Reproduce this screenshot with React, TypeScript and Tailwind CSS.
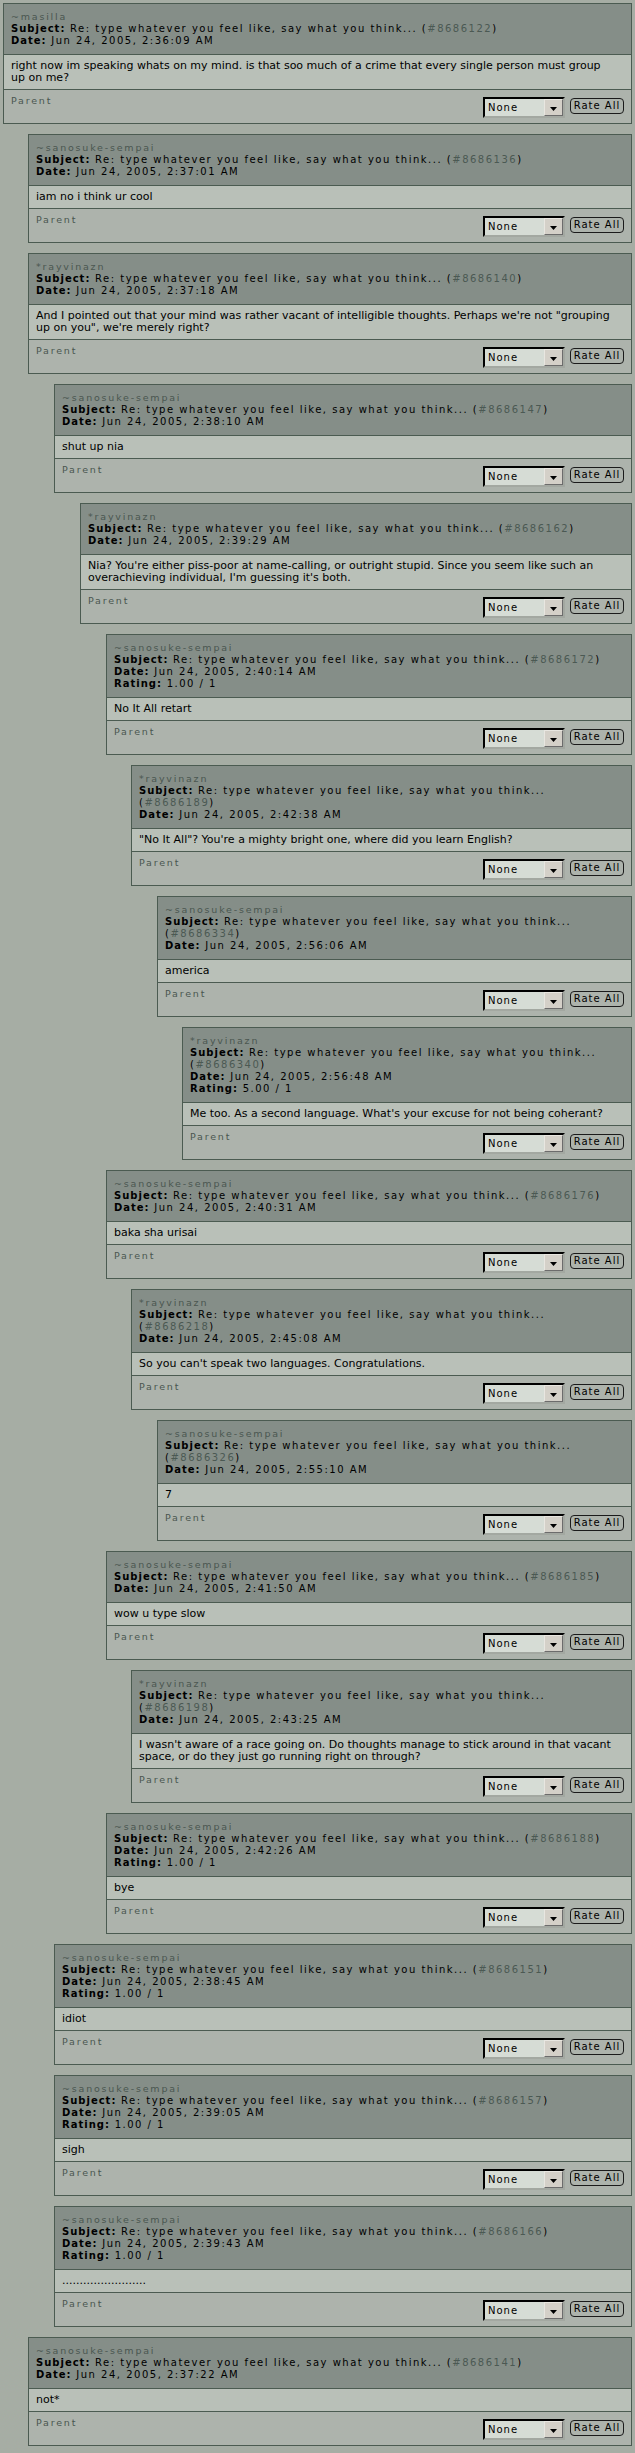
import React from "react";

type Post = {
  level: number;
  user: string;
  id: string;
  date: string;
  rating?: string;
  body: string[];
};

const posts: Post[] = [
  { level: 0, user: "~masilla", id: "8686122", date: "Jun 24, 2005, 2:36:09 AM", body: ["right now im speaking whats on my mind. is that soo much of a crime that every single person must group", "up on me?"] },
  { level: 1, user: "~sanosuke-sempai", id: "8686136", date: "Jun 24, 2005, 2:37:01 AM", body: ["iam no i think ur cool"] },
  { level: 1, user: "*rayvinazn", id: "8686140", date: "Jun 24, 2005, 2:37:18 AM", body: ["And I pointed out that your mind was rather vacant of intelligible thoughts. Perhaps we're not \"grouping", "up on you\", we're merely right?"] },
  { level: 2, user: "~sanosuke-sempai", id: "8686147", date: "Jun 24, 2005, 2:38:10 AM", body: ["shut up nia"] },
  { level: 3, user: "*rayvinazn", id: "8686162", date: "Jun 24, 2005, 2:39:29 AM", body: ["Nia? You're either piss-poor at name-calling, or outright stupid. Since you seem like such an", "overachieving individual, I'm guessing it's both."] },
  { level: 4, user: "~sanosuke-sempai", id: "8686172", date: "Jun 24, 2005, 2:40:14 AM", rating: "1.00 / 1", body: ["No It All retart"] },
  { level: 5, user: "*rayvinazn", id: "8686189", date: "Jun 24, 2005, 2:42:38 AM", body: ["\"No It All\"? You're a mighty bright one, where did you learn English?"] },
  { level: 6, user: "~sanosuke-sempai", id: "8686334", date: "Jun 24, 2005, 2:56:06 AM", body: ["america"] },
  { level: 7, user: "*rayvinazn", id: "8686340", date: "Jun 24, 2005, 2:56:48 AM", rating: "5.00 / 1", body: ["Me too. As a second language. What's your excuse for not being coherant?"] },
  { level: 4, user: "~sanosuke-sempai", id: "8686176", date: "Jun 24, 2005, 2:40:31 AM", body: ["baka sha urisai"] },
  { level: 5, user: "*rayvinazn", id: "8686218", date: "Jun 24, 2005, 2:45:08 AM", body: ["So you can't speak two languages. Congratulations."] },
  { level: 6, user: "~sanosuke-sempai", id: "8686326", date: "Jun 24, 2005, 2:55:10 AM", body: ["7"] },
  { level: 4, user: "~sanosuke-sempai", id: "8686185", date: "Jun 24, 2005, 2:41:50 AM", body: ["wow u type slow"] },
  { level: 5, user: "*rayvinazn", id: "8686198", date: "Jun 24, 2005, 2:43:25 AM", body: ["I wasn't aware of a race going on. Do thoughts manage to stick around in that vacant", "space, or do they just go running right on through?"] },
  { level: 4, user: "~sanosuke-sempai", id: "8686188", date: "Jun 24, 2005, 2:42:26 AM", rating: "1.00 / 1", body: ["bye"] },
  { level: 2, user: "~sanosuke-sempai", id: "8686151", date: "Jun 24, 2005, 2:38:45 AM", rating: "1.00 / 1", body: ["idiot"] },
  { level: 2, user: "~sanosuke-sempai", id: "8686157", date: "Jun 24, 2005, 2:39:05 AM", rating: "1.00 / 1", body: ["sigh"] },
  { level: 2, user: "~sanosuke-sempai", id: "8686166", date: "Jun 24, 2005, 2:39:43 AM", rating: "1.00 / 1", body: ["........................"] },
  { level: 1, user: "~sanosuke-sempai", id: "8686141", date: "Jun 24, 2005, 2:37:22 AM", body: ["not*"] },
];

const indent = [
  "ml-0",
  "ml-[25px]",
  "ml-[51px]",
  "ml-[77px]",
  "ml-[103px]",
  "ml-[128px]",
  "ml-[154px]",
  "ml-[179px]",
];

function SelectBox() {
  return (
    <div className="flex h-[21px] w-[82px] items-center border-2 border-t-black border-l-black border-r-[#a3a8a1] border-b-[#a3a8a1] bg-[#d6dcd5]">
      <span className="pl-[3px] text-[10px] tracking-[1px] text-black leading-[12px]">None</span>
      <div className="ml-auto mr-0 flex h-[17px] w-[19px] items-center justify-center border border-t-[#e8e6e0] border-l-[#e8e6e0] border-r-[#6c6c6c] border-b-[#6c6c6c] bg-[#d4d0c8]">
        <svg width="7" height="4" viewBox="0 0 7 4" className="mt-[3px]">
          <polygon points="0,0 7,0 3.5,4" fill="#000" />
        </svg>
      </div>
    </div>
  );
}

function PostBox({ p }: { p: Post }) {
  const wrap = p.level >= 5;
  return (
    <div className={`${indent[p.level]} border border-[#4b5b51] bg-[#adb3ac]`}>
      <div className="border-b border-[#4b5b51] bg-[#858e88] px-[7px] py-[7px] leading-[12px]">
        <div className="text-[9.5px] tracking-[1.8px] text-[#4a5650] leading-[12px]">{p.user}</div>
        <div className="text-[10px] tracking-[1.5px] text-black leading-[12px] whitespace-nowrap">
          <span className="font-bold tracking-[1px]">Subject:</span> Re: type whatever you feel like, say what you think...
          {wrap ? <br /> : " "}(<span className="text-[#4b5953]">#{p.id}</span>)
        </div>
        <div className="text-[10px] tracking-[1.5px] text-black leading-[12px]">
          <span className="font-bold tracking-[1px]">Date:</span> {p.date}
        </div>
        {p.rating && (
          <div className="text-[10px] tracking-[1.5px] text-black leading-[12px]">
            <span className="font-bold tracking-[1px]">Rating:</span> {p.rating}
          </div>
        )}
      </div>
      <div className="border-b border-[#4b5b51] bg-[#b9c0b8] px-[7px] py-[5px] text-[11px] leading-[12px] text-black whitespace-nowrap">
        {p.body.map((l, i) => (
          <div key={i}>{l}</div>
        ))}
      </div>
      <div className="flex items-start justify-between px-[7px] pt-[5px] pb-[5px]">
        <div className="text-[9.5px] tracking-[1.8px] leading-[12px] text-[#4a5650]">Parent</div>
        <div className="mt-[2px] flex items-start gap-[5px]">
          <SelectBox />
          <div className="mt-[1px] flex h-[16px] w-[54px] items-center justify-center rounded-[4px] border border-[#1b1b1b] text-[10px] tracking-[1px] text-black leading-[12px]">
            Rate All
          </div>
        </div>
      </div>
    </div>
  );
}

export default function App() {
  return (
    <div className="min-h-[2453px] bg-[#a6ada4] px-[3px] pt-[3px] pb-[3px] font-['DejaVu_Sans',Verdana,sans-serif]">
      <div className="flex flex-col gap-[10px]">
        {posts.map((p, i) => (
          <PostBox key={i} p={p} />
        ))}
      </div>
    </div>
  );
}
